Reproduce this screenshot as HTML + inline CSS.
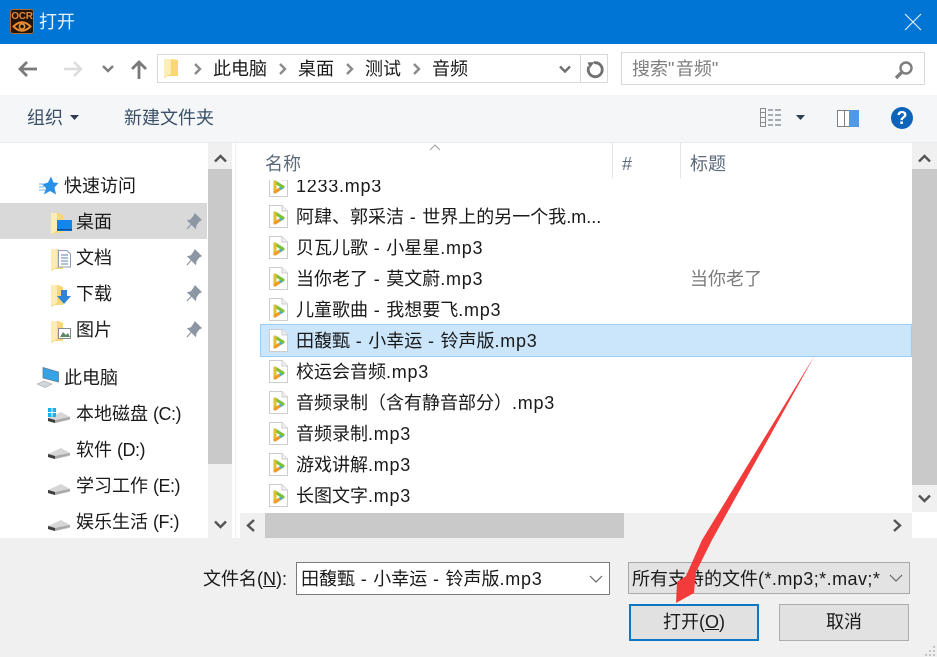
<!DOCTYPE html>
<html><head><meta charset="utf-8">
<style>
html,body{margin:0;padding:0;background:#fff}
#p{position:relative;width:937px;height:657px;overflow:hidden;background:#fff;font-family:"Liberation Sans","Noto Sans CJK SC",sans-serif;font-size:18px;color:#1a1a1a}
#p div,#p svg{position:absolute}
.t{white-space:nowrap;line-height:24px;height:24px}
.tb{color:#3b5068}
.g{color:#7b7b7b}
.sb{background:#c9c9c9}
.tr{background:#f0f0f0}
.f{left:296px}
.l{letter-spacing:.75px}
.n{letter-spacing:-.5px}
</style></head><body><div id="p">
<svg width="0" height="0"><defs>
<g id="fi"><path d="M.5.5H13L18.500 6V22.500H.5Z" fill="#fff" stroke="#cdcdcd"/><path d="M13 .5V6H18.500" fill="#f0f0f0" stroke="#cdcdcd"/><path d="M6 8L14 13 6 18Z" fill="#fff" stroke="#38a9df" stroke-width="3" stroke-linejoin="round"/><path d="M6 8L14 13" stroke="#7ec234" stroke-width="3" stroke-linecap="round"/><path d="M6 18V8" stroke="#e0c02c" stroke-width="3" stroke-linecap="round"/><path d="M6 18L10 15.500" stroke="#f39a1f" stroke-width="3" stroke-linecap="round"/></g>
<g id="pin"><path d="M9 1L15 7 13 8 10 12 9.500 15 2 7.500 5 7 8 3ZM5.500 11L1 16" fill="#8d97a3" stroke="#8d97a3" stroke-width="1.200"/></g>
<g id="fo"><path d="M0 2H7L12 4V22H4L0 24Z" fill="#f6d77c"/><path d="M0 2H6V20L0 23Z" fill="#fcecb4"/></g>
<g id="dr"><path d="M1 7L14 1 23 6V9L8 12 1 10Z" fill="#d6d6d6"/><path d="M1 7L8 9 23 6V8L8 12 1 10Z" fill="#a8a8a8"/><path d="M1 7L8 9V12L1 10Z" fill="#3d3d3d"/></g>
</defs></svg>

<!-- title -->
<div style="left:0;top:0;width:937px;height:44px;background:#0175d4"></div>
<div style="left:10px;top:9px;width:24px;height:25px;background:#21140a;border-radius:3px;box-shadow:inset 0 0 0 1px #b06a30"></div>
<div style="left:10px;top:12px;width:24px;height:10px;font:bold 10px/10px 'Liberation Sans',sans-serif;color:#e8893a;letter-spacing:-.2px;text-align:center">OCR</div>
<svg style="left:12px;top:21px" width="20" height="11"><path d="M1.500 5.500Q10-3 18.500 5.500 10 14 1.500 5.500Z" fill="none" stroke="#ee8a2c" stroke-width="2"/><circle cx="10" cy="5.500" r="2.600" fill="none" stroke="#f4a040" stroke-width="1.500"/></svg>
<div class="t" style="left:39px;top:10px;color:#e8f3fc">打开</div>
<svg style="left:904px;top:13px" width="18" height="18"><path d="M1 1L17 17M17 1L1 17" stroke="#dcecf9" stroke-width="1.200"/></svg>

<!-- nav -->
<svg style="left:17px;top:59px" width="22" height="20"><path d="M20 10H3M10 3L3 10 10 17" fill="none" stroke="#7a7a7a" stroke-width="2.800"/></svg>
<svg style="left:63px;top:59px" width="22" height="20"><path d="M1 10H18M11 3L18 10 11 17" fill="none" stroke="#dcdcdc" stroke-width="2.400"/></svg>
<svg style="left:102px;top:64px" width="12" height="10"><path d="M1 2L6 7 11 2" fill="none" stroke="#7d7d7d" stroke-width="2.400"/></svg>
<svg style="left:129px;top:59px" width="20" height="22"><path d="M10 20V3M3 10L10 3 17 10" fill="none" stroke="#7a7a7a" stroke-width="2.800"/></svg>
<div style="left:157px;top:54px;width:451px;height:29px;border:1px solid #d9d9d9;box-sizing:border-box"></div>
<svg style="left:163px;top:58px" width="16" height="21"><path d="M1 1H8L15 2V18H5L1 20Z" fill="#f8d774"/><path d="M1 1H8V16L1 19Z" fill="#fdeeb8"/></svg>
<svg style="left:193px;top:63px" width="10" height="12"><path d="M2 1L7 6 2 11" fill="none" stroke="#8a8a8a" stroke-width="2.400"/></svg>
<div class="t" style="left:213px;top:57px">此电脑</div>
<svg style="left:278px;top:63px" width="10" height="12"><path d="M2 1L7 6 2 11" fill="none" stroke="#8a8a8a" stroke-width="2.400"/></svg>
<div class="t" style="left:298px;top:57px">桌面</div>
<svg style="left:345px;top:63px" width="10" height="12"><path d="M2 1L7 6 2 11" fill="none" stroke="#8a8a8a" stroke-width="2.400"/></svg>
<div class="t" style="left:365px;top:57px">测试</div>
<svg style="left:412px;top:63px" width="10" height="12"><path d="M2 1L7 6 2 11" fill="none" stroke="#8a8a8a" stroke-width="2.400"/></svg>
<div class="t" style="left:432px;top:57px">音频</div>
<svg style="left:558px;top:65px" width="14" height="9"><path d="M2 1.500L7 6.500 12 1.500" fill="none" stroke="#6f6f6f" stroke-width="2.400"/></svg>
<div style="left:580px;top:55px;width:1px;height:27px;background:#d9d9d9"></div>
<svg style="left:585px;top:59px" width="21" height="21"><path d="M9 3.800A7 7 0 1 1 4 7.500" fill="none" stroke="#707070" stroke-width="2.800"/><path d="M2.500 3.500L9.500 3 5 9Z" fill="#707070"/></svg>
<div style="left:621px;top:52px;width:304px;height:33px;border:1px solid #d9d9d9;box-sizing:border-box"></div>
<div class="t" style="left:632px;top:57px;color:#7e7e7e">搜索<span style="letter-spacing:1.500px">"</span>音频<span style="letter-spacing:1.500px">"</span></div>
<svg style="left:894px;top:60px" width="20" height="20"><circle cx="12" cy="8" r="5.500" fill="none" stroke="#7e7e7e" stroke-width="2.400"/><path d="M8 12L2 18" stroke="#7e7e7e" stroke-width="3.400"/></svg>

<!-- toolbar -->
<div style="left:0;top:95px;width:937px;height:47px;background:#f4f6f8"></div>
<div style="left:0;top:142px;width:937px;height:1px;background:#e9ebee"></div>
<div class="t tb" style="left:27px;top:106px">组织</div>
<svg style="left:70px;top:115px" width="9" height="6"><path d="M0 0H9L4.500 5Z" fill="#2d3e50"/></svg>
<div class="t tb" style="left:124px;top:106px">新建文件夹</div>
<svg style="left:759px;top:107px" width="24" height="21" fill="none" stroke-width="1"><path d="M1.500 1.500h5v4h-5zM1.500 5.500h5v5h-5zM1.500 10.500h5v5h-5zM1.500 15.500h5v4h-5z" stroke="#8a8a8a"/><path d="M9 3h5M16 3h6M9 8h5M16 8h6M9 13h5M16 13h6M9 18h5M16 18h6" stroke="#55606c"/></svg>
<svg style="left:796px;top:115px" width="9" height="6"><path d="M0 0H9L4.500 5Z" fill="#2d3e50"/></svg>
<div style="left:837px;top:110px;width:22px;height:17px;border:1px solid #808080;box-sizing:border-box;background:#fff"></div>
<div style="left:849px;top:110px;width:10px;height:17px;background:#4f9ae2"></div>
<div style="left:844px;top:111px;width:1px;height:15px;background:#808080"></div>
<div style="left:891px;top:107px;width:22px;height:22px;border-radius:50%;background:#0e64b8;color:#fff;font:bold 18px/22px 'Liberation Sans',sans-serif;text-align:center">?</div>

<!-- left tree -->
<div style="left:0;top:203px;width:207px;height:36px;background:#d9d9d9"></div>
<svg style="left:39px;top:176px" width="20" height="20"><path d="M12 .5L14.500 6.500 19.500 7 15.500 11.500 17 18.500 11 15 5 18.500 7 12 3 8.500 9 6.500Z" fill="#2b90e8"/><path d="M0 8H5M0 11H5M0 14H6" stroke="#8cc2ee" stroke-width="1.200"/></svg>
<div class="t" style="left:64px;top:174px">快速访问</div>
<svg style="left:51px;top:211px" width="22" height="24"><use href="#fo"/><rect x="6" y="9" width="15" height="11" fill="#1685e8"/><rect x="6" y="18" width="15" height="1.500" fill="#0b4f98"/></svg>
<div class="t" style="left:76px;top:210px">桌面</div>
<svg style="left:186px;top:213px" width="18" height="18"><use href="#pin"/></svg>
<svg style="left:51px;top:247px" width="22" height="24"><use href="#fo"/><path d="M7.500 3.500H16L19.500 7V20H7.500Z" fill="#fff" stroke="#8ba1b5"/><path d="M10 8h7M10 11h7M10 14h7M10 17h7" stroke="#5a85ad"/></svg>
<div class="t" style="left:76px;top:246px">文档</div>
<svg style="left:186px;top:249px" width="18" height="18"><use href="#pin"/></svg>
<svg style="left:51px;top:283px" width="22" height="24"><use href="#fo"/><path d="M10 7H16V13H20L13 21 6 13H10Z" fill="#2f84da"/></svg>
<div class="t" style="left:76px;top:282px">下载</div>
<svg style="left:186px;top:285px" width="18" height="18"><use href="#pin"/></svg>
<svg style="left:51px;top:319px" width="22" height="24"><use href="#fo"/><rect x="7.500" y="9.500" width="12" height="10" fill="#fff" stroke="#8b8b8b"/><path d="M9 18L12 13 15 16 17 14 19 18Z" fill="#5e8a6a"/></svg>
<div class="t" style="left:76px;top:318px">图片</div>
<svg style="left:186px;top:321px" width="18" height="18"><use href="#pin"/></svg>
<svg style="left:36px;top:367px" width="24" height="22"><path d="M7 .5L22.500 5V15L7 11Z" fill="#35a3e6" stroke="#5f7f96" stroke-width=".8"/><path d="M1 17L8 14 16 17 9 20.500Z" fill="#d2d6da" stroke="#a5aaae" stroke-width=".6"/></svg>
<div class="t" style="left:64px;top:366px">此电脑</div>
<svg style="left:47px;top:405px" width="24" height="20"><use href="#dr" y="6"/><path d="M1 3h3.500v4H1zM5.500 3H9v4H5.500zM1 8h3.500v4H1zM5.500 8H9v4H5.500z" fill="#18b2ee"/></svg>
<div class="t" style="left:76px;top:402px">本地磁盘 <span class="n">(C:)</span></div>
<svg style="left:47px;top:441px" width="24" height="20"><use href="#dr" y="6"/></svg>
<div class="t" style="left:76px;top:438px">软件 <span class="n">(D:)</span></div>
<svg style="left:47px;top:477px" width="24" height="20"><use href="#dr" y="6"/></svg>
<div class="t" style="left:76px;top:474px">学习工作 <span class="n">(E:)</span></div>
<svg style="left:47px;top:513px" width="24" height="20"><use href="#dr" y="6"/></svg>
<div class="t" style="left:76px;top:510px">娱乐生活 <span class="n">(F:)</span></div>

<!-- left scrollbar -->
<div class="tr" style="left:208px;top:143px;width:24px;height:395px"></div>
<div class="sb" style="left:208px;top:169px;width:24px;height:295px"></div>
<svg style="left:214px;top:154px" width="13" height="9"><path d="M1 7.500L6.500 2 12 7.500" fill="none" stroke="#555" stroke-width="2.400"/></svg>
<svg style="left:214px;top:520px" width="13" height="9"><path d="M1 1.500L6.500 7 12 1.500" fill="none" stroke="#555" stroke-width="2.400"/></svg>
<div style="left:235px;top:143px;width:1px;height:395px;background:#f0f0f0"></div>

<!-- header -->
<div class="t g" style="left:265px;top:152px;color:#5c6b7c">名称</div>
<svg style="left:429px;top:144px" width="12" height="7"><path d="M1 6L6 1 11 6" fill="none" stroke="#a0a0a0"/></svg>
<div style="left:612px;top:143px;width:1px;height:35px;background:#e5e5e5"></div>
<div class="t" style="left:622px;top:152px;color:#5c6b7c">#</div>
<div style="left:680px;top:143px;width:1px;height:35px;background:#e5e5e5"></div>
<div class="t" style="left:690px;top:152px;color:#5c6b7c">标题</div>

<!-- list -->
<div style="left:260px;top:324px;width:652px;height:33px;background:#cbe6fb;border:1px solid #9dcdf2;box-sizing:border-box"></div>
<div style="left:240px;top:180px;width:672px;height:333px;overflow:hidden">
<svg style="left:29px;top:-6px" width="20" height="24"><use href="#fi"/></svg><div class="t f" style="left:56px;top:-6px"><span class="l">1233.mp3</span></div>
<svg style="left:29px;top:25px" width="20" height="24"><use href="#fi"/></svg><div class="t f" style="left:56px;top:25px">阿肆、郭采洁<span class="l"> - </span>世界上的另一个我.m...</div>
<svg style="left:29px;top:56px" width="20" height="24"><use href="#fi"/></svg><div class="t f" style="left:56px;top:56px">贝瓦儿歌<span class="l"> - </span>小星星<span class="l">.mp3</span></div>
<svg style="left:29px;top:87px" width="20" height="24"><use href="#fi"/></svg><div class="t f" style="left:56px;top:87px">当你老了<span class="l"> - </span>莫文蔚<span class="l">.mp3</span></div>
<div class="t g" style="left:450px;top:87px">当你老了</div>
<svg style="left:29px;top:118px" width="20" height="24"><use href="#fi"/></svg><div class="t f" style="left:56px;top:118px">儿童歌曲<span class="l"> - </span>我想要飞<span class="l">.mp3</span></div>
<svg style="left:29px;top:149px" width="20" height="24"><use href="#fi"/></svg><div class="t f" style="left:56px;top:149px">田馥甄<span class="l"> - </span>小幸运<span class="l"> - </span>铃声版<span class="l">.mp3</span></div>
<svg style="left:29px;top:180px" width="20" height="24"><use href="#fi"/></svg><div class="t f" style="left:56px;top:180px">校运会音频<span class="l">.mp3</span></div>
<svg style="left:29px;top:211px" width="20" height="24"><use href="#fi"/></svg><div class="t f" style="left:56px;top:211px">音频录制（含有静音部分）<span class="l">.mp3</span></div>
<svg style="left:29px;top:242px" width="20" height="24"><use href="#fi"/></svg><div class="t f" style="left:56px;top:242px">音频录制<span class="l">.mp3</span></div>
<svg style="left:29px;top:273px" width="20" height="24"><use href="#fi"/></svg><div class="t f" style="left:56px;top:273px">游戏讲解<span class="l">.mp3</span></div>
<svg style="left:29px;top:304px" width="20" height="24"><use href="#fi"/></svg><div class="t f" style="left:56px;top:304px">长图文字<span class="l">.mp3</span></div>
</div>

<!-- right scrollbar -->
<div class="tr" style="left:912px;top:143px;width:25px;height:369px"></div>
<div class="sb" style="left:912px;top:169px;width:25px;height:316px"></div>
<svg style="left:918px;top:154px" width="13" height="9"><path d="M1 7.500L6.500 2 12 7.500" fill="none" stroke="#555" stroke-width="2.400"/></svg>
<svg style="left:918px;top:494px" width="13" height="9"><path d="M1 1.500L6.500 7 12 1.500" fill="none" stroke="#555" stroke-width="2.400"/></svg>

<!-- h scrollbar -->
<div class="tr" style="left:240px;top:513px;width:672px;height:25px"></div>
<div class="sb" style="left:265px;top:513px;width:359px;height:25px"></div>
<svg style="left:246px;top:519px" width="10" height="13"><path d="M8 1L2 6.500 8 12" fill="none" stroke="#555" stroke-width="2.400"/></svg>
<svg style="left:892px;top:519px" width="10" height="13"><path d="M2 1L8 6.500 2 12" fill="none" stroke="#555" stroke-width="2.400"/></svg>

<!-- bottom -->
<div style="left:0;top:538px;width:937px;height:119px;background:#f0f0f0"></div>
<div class="t" style="left:203px;top:567px">文件名(<span style="text-decoration:underline">N</span>):</div>
<div style="left:296px;top:562px;width:314px;height:33px;background:#fff;border:1px solid #7a7a7a;box-sizing:border-box"></div>
<div class="t" style="left:301px;top:567px">田馥甄<span class="l"> - </span>小幸运<span class="l"> - </span>铃声版<span class="l">.mp3</span></div>
<svg style="left:589px;top:575px" width="14" height="8"><path d="M1 1L7 7 13 1" fill="none" stroke="#666" stroke-width="1.200"/></svg>
<div style="left:628px;top:562px;width:282px;height:32px;background:#e3e3e3;border:1px solid #a8a8a8;box-sizing:border-box"></div>
<div class="t" style="left:632px;top:567px;width:250px;overflow:hidden">所有支持的文件<span style="letter-spacing:.45px">(*.mp3;*.mav;*</span></div>
<svg style="left:889px;top:574px" width="14" height="8"><path d="M1 1L7 7 13 1" fill="none" stroke="#666" stroke-width="1.200"/></svg>
<div style="left:629px;top:604px;width:130px;height:37px;background:#e1e1e1;border:2px solid #0f76c4;box-sizing:border-box"></div>
<div class="t" style="left:629px;top:610px;width:130px;text-align:center">打开(<span style="text-decoration:underline">O</span>)</div>
<div style="left:779px;top:604px;width:130px;height:37px;background:#e1e1e1;border:1px solid #adadad;box-sizing:border-box"></div>
<div class="t" style="left:779px;top:610px;width:130px;text-align:center">取消</div>
<svg style="left:923px;top:645px" width="14" height="12"><path d="M10 1h2v2h-2zM6 5h2v2H6zM10 5h2v2h-2zM2 9h2v2H2zM6 9h2v2H6zM10 9h2v2h-2z" fill="#c4c4c4"/></svg>

<!-- arrow -->
<svg style="left:0;top:0" width="937" height="657"><path d="M815 355L712 540 696 572 694 593 676 603 677 582 686 576 702 540Z" fill="#f33b3b"/></svg>
</div></body></html>
